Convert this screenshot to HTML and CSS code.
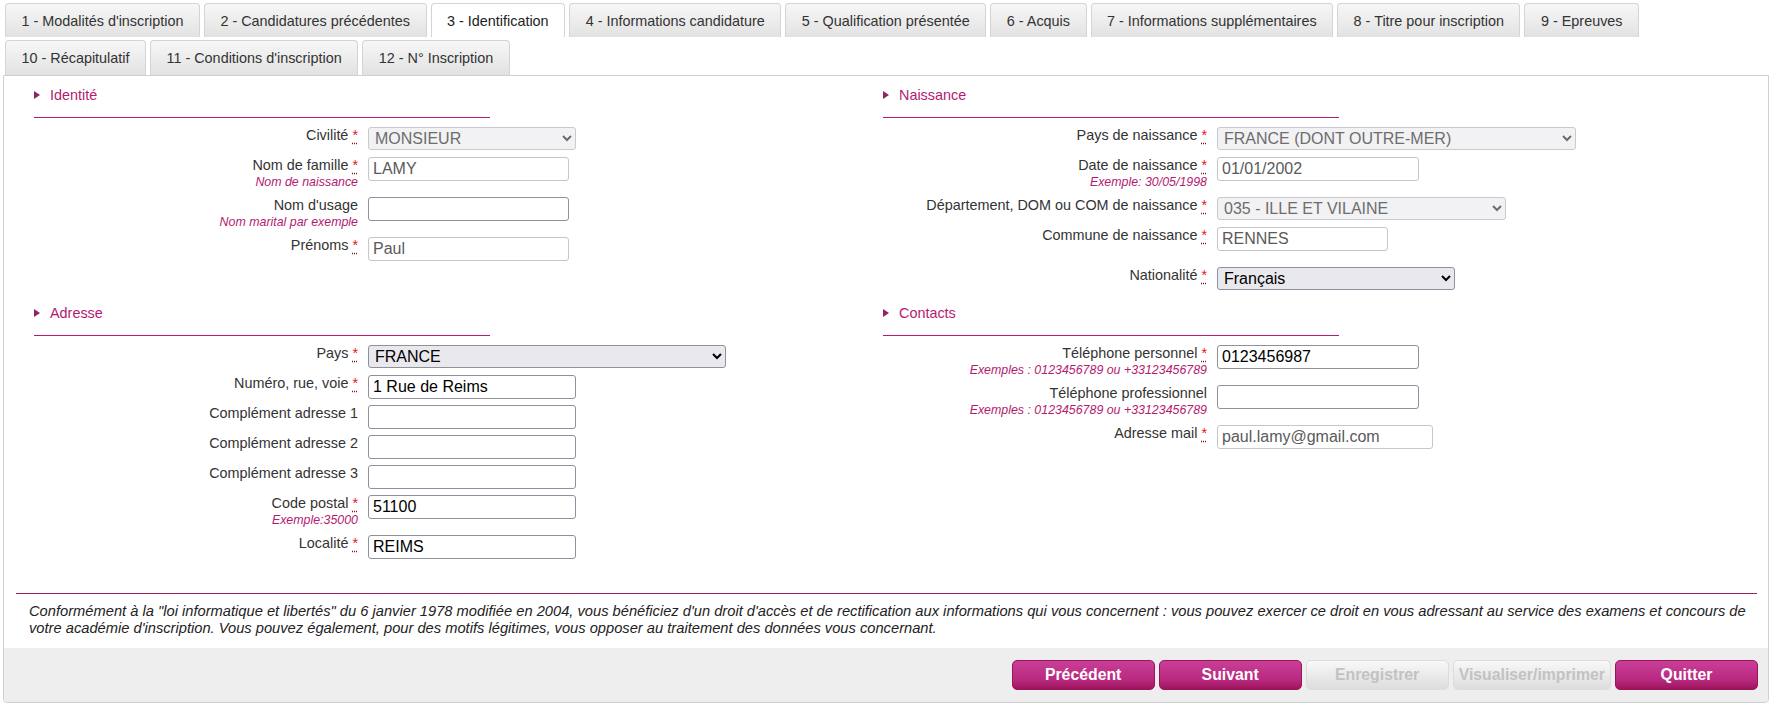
FILE: index.html
```html
<!DOCTYPE html>
<html lang="fr">
<head>
  <meta charset="UTF-8" />
  <title>Inscription - Identification</title>
  <link rel="stylesheet" href="styles.css">
</head>
<body>
  <div class="tabs">
    <div class="tab-row">
      <a class="tab" href="#">1 - Modalités d'inscription</a>
      <a class="tab" href="#">2 - Candidatures précédentes</a>
      <a class="tab active" href="#">3 - Identification</a>
      <a class="tab" href="#">4 - Informations candidature</a>
      <a class="tab" href="#">5 - Qualification présentée</a>
      <a class="tab" href="#">6 - Acquis</a>
      <a class="tab" href="#">7 - Informations supplémentaires</a>
      <a class="tab" href="#">8 - Titre pour inscription</a>
      <a class="tab" href="#">9 - Epreuves</a>
    </div>
    <div class="tab-row">
      <a class="tab" href="#">10 - Récapitulatif</a>
      <a class="tab" href="#">11 - Conditions d'inscription</a>
      <a class="tab" href="#">12 - N° Inscription</a>
    </div>
  </div>

  <div class="panel">
    <div class="form-grid">

      <section class="section">
        <h2 class="section-title"><svg class="arrow" width="6" height="8" viewBox="0 0 6 8"><polygon points="0,0 6,4 0,8" /></svg>Identité</h2>
        <div class="row">
          <div class="label">Civilité <abbr class="req" title="obligatoire">*</abbr></div>
          <select class="field w-208" disabled><option>MONSIEUR</option></select>
        </div>
        <div class="row">
          <div class="label">Nom de famille <abbr class="req" title="obligatoire">*</abbr><span class="hint">Nom de naissance</span></div>
          <input class="field ro w-201" type="text" value="LAMY" readonly>
        </div>
        <div class="row">
          <div class="label">Nom d'usage<span class="hint">Nom marital par exemple</span></div>
          <input class="field w-201" type="text" value="">
        </div>
        <div class="row">
          <div class="label">Prénoms <abbr class="req" title="obligatoire">*</abbr></div>
          <input class="field ro w-201" type="text" value="Paul" readonly>
        </div>
      </section>

      <section class="section">
        <h2 class="section-title"><svg class="arrow" width="6" height="8" viewBox="0 0 6 8"><polygon points="0,0 6,4 0,8" /></svg>Naissance</h2>
        <div class="row">
          <div class="label">Pays de naissance <abbr class="req" title="obligatoire">*</abbr></div>
          <select class="field w-359" disabled><option>FRANCE (DONT OUTRE-MER)</option></select>
        </div>
        <div class="row">
          <div class="label">Date de naissance <abbr class="req" title="obligatoire">*</abbr><span class="hint">Exemple: 30/05/1998</span></div>
          <input class="field ro w-202" type="text" value="01/01/2002" readonly>
        </div>
        <div class="row">
          <div class="label">Département, DOM ou COM de naissance <abbr class="req" title="obligatoire">*</abbr></div>
          <select class="field w-289" disabled><option>035 - ILLE ET VILAINE</option></select>
        </div>
        <div class="row">
          <div class="label">Commune de naissance <abbr class="req" title="obligatoire">*</abbr><span class="hint">&nbsp;</span></div>
          <input class="field ro w-171" type="text" value="RENNES" readonly>
        </div>
        <div class="row">
          <div class="label">Nationalité <abbr class="req" title="obligatoire">*</abbr></div>
          <select class="field w-238"><option>Français</option></select>
        </div>
      </section>

      <section class="section">
        <h2 class="section-title"><svg class="arrow" width="6" height="8" viewBox="0 0 6 8"><polygon points="0,0 6,4 0,8" /></svg>Adresse</h2>
        <div class="row">
          <div class="label">Pays <abbr class="req" title="obligatoire">*</abbr></div>
          <select class="field w-358"><option>FRANCE</option></select>
        </div>
        <div class="row">
          <div class="label">Numéro, rue, voie <abbr class="req" title="obligatoire">*</abbr></div>
          <input class="field w-208" type="text" value="1 Rue de Reims">
        </div>
        <div class="row">
          <div class="label">Complément adresse 1</div>
          <input class="field w-208" type="text" value="">
        </div>
        <div class="row">
          <div class="label">Complément adresse 2</div>
          <input class="field w-208" type="text" value="">
        </div>
        <div class="row">
          <div class="label">Complément adresse 3</div>
          <input class="field w-208" type="text" value="">
        </div>
        <div class="row">
          <div class="label">Code postal <abbr class="req" title="obligatoire">*</abbr><span class="hint">Exemple:35000</span></div>
          <input class="field w-208" type="text" value="51100">
        </div>
        <div class="row">
          <div class="label">Localité <abbr class="req" title="obligatoire">*</abbr></div>
          <input class="field w-208" type="text" value="REIMS">
        </div>
      </section>

      <section class="section">
        <h2 class="section-title"><svg class="arrow" width="6" height="8" viewBox="0 0 6 8"><polygon points="0,0 6,4 0,8" /></svg>Contacts</h2>
        <div class="row">
          <div class="label">Téléphone personnel <abbr class="req" title="obligatoire">*</abbr><span class="hint">Exemples : 0123456789 ou +33123456789</span></div>
          <input class="field w-202" type="text" value="0123456987">
        </div>
        <div class="row">
          <div class="label">Téléphone professionnel<span class="hint">Exemples : 0123456789 ou +33123456789</span></div>
          <input class="field w-202" type="text" value="">
        </div>
        <div class="row">
          <div class="label">Adresse mail <abbr class="req" title="obligatoire">*</abbr></div>
          <input class="field ro w-216" type="text" value="paul.lamy@gmail.com" readonly>
        </div>
      </section>

    </div>

    <p class="legal">Conformément à la "loi informatique et libertés" du 6 janvier 1978 modifiée en 2004, vous bénéficiez d'un droit d'accès et de rectification aux informations qui vous concernent : vous pouvez exercer ce droit en vous adressant au service des examens et concours de votre académie d'inscription. Vous pouvez également, pour des motifs légitimes, vous opposer au traitement des données vous concernant.</p>

    <div class="actions">
      <button class="btn">Précédent</button>
      <button class="btn">Suivant</button>
      <button class="btn" disabled>Enregistrer</button>
      <button class="btn" disabled>Visualiser/imprimer</button>
      <button class="btn">Quitter</button>
    </div>
  </div>
</body>
</html>
```

FILE: styles.css
```css
body {
  font-family: "Liberation Sans", Arial, sans-serif;
  font-size: 14.4px;
  color: #333;
  background: #fff;
  margin: 0;
  padding: 0 8px 0 3px;
}

/* onglets */
.tabs {
  padding: 3px 0 0 2px;
}

.tab-row {
  display: flex;
  gap: 4px;
  margin-bottom: 3px;
}

.tab-row:last-child {
  margin-bottom: 0;
}

.tab {
  display: block;
  height: 34px;
  line-height: 34px;
  padding: 0 15.5px;
  box-sizing: border-box;
  color: #333;
  text-decoration: none;
  white-space: nowrap;
  border: 1px solid #d4d4d4;
  border-bottom: none;
  border-radius: 4px 4px 0 0;
  background: linear-gradient(#f7f7f7, #e2e2e2);
}

.tab-row:last-child .tab {
  height: 35px;
}

.tab.active {
  background: #fff;
  color: #222;
}

/* panneau */
.panel {
  border: 1px solid #cfcfcf;
  border-radius: 0 0 4px 4px;
  padding-top: 3px;
}

.form-grid {
  display: grid;
  grid-template-columns: 849px 1fr;
  padding-left: 30px;
  padding-bottom: 28px;
}

.section {
  padding-top: 6px;
}

.section-title {
  display: flex;
  align-items: center;
  width: 456px;
  margin: 0 0 9px;
  padding-bottom: 12px;
  height: 20px;
  font-size: 14.4px;
  font-weight: normal;
  line-height: 20px;
  color: #b41a70;
  border-bottom: 1px solid #b41a70;
}

.arrow {
  fill: #8e2463;
  margin-right: 10px;
}

.row {
  display: flex;
  align-items: flex-start;
  gap: 10px;
  margin-bottom: 6px;
  min-height: 24px;
}

.label {
  width: 324px;
  flex-shrink: 0;
  text-align: right;
  line-height: 17px;
  color: #333;
}

.req {
  color: #e8141c;
  text-decoration: underline dotted #8a1010;
  text-underline-offset: 3px;
  cursor: help;
}

.hint {
  display: block;
  font-size: 12.4px;
  font-style: italic;
  line-height: 17px;
  color: #b41a70;
}

.field {
  height: 24px;
  box-sizing: border-box;
  font-family: "Liberation Sans", Arial, sans-serif;
  font-size: 16px;
  color: #000;
  border: 1px solid #8f8f9d;
  border-radius: 3px;
  padding: 0 4px;
  margin: 0;
  background: #fff;
}

select.field {
  height: 23px;
  background-color: #e9e9ed;
  padding: 0 2px;
}

select.field:disabled {
  background-color: #f2f2f4;
  border-color: #c9c9cf;
  color: #6d6d6d;
  opacity: 1;
}

.field.ro {
  border-color: #c6c6c6;
  color: #5a5a5a;
}

.w-171 { width: 171px; }
.w-201 { width: 201px; }
.w-202 { width: 202px; }
.w-208 { width: 208px; }
.w-216 { width: 216px; }
.w-238 { width: 238px; }
.w-289 { width: 289px; }
.w-358 { width: 358px; }
.w-359 { width: 359px; }

/* mentions */
.legal {
  margin: 0 11px 0 12px;
  padding: 9px 4px 11px 13px;
  border-top: 1px solid #9e1f5f;
  font-size: 14.7px;
  font-style: italic;
  line-height: 17px;
  color: #222;
}

/* boutons */
.actions {
  display: flex;
  justify-content: flex-end;
  gap: 4px;
  padding: 12px 10px;
  background: #eeeeee;
  border-radius: 0 0 4px 4px;
}

.btn {
  min-width: 143px;
  height: 30px;
  border: 1px solid #9c1458;
  border-radius: 5px;
  background: linear-gradient(#c93f98, #b8287f 70%, #9d145a);
  color: #fff;
  font-family: "Liberation Sans", Arial, sans-serif;
  font-size: 15.8px;
  font-weight: bold;
  cursor: pointer;
  padding: 0 5px;
}

.btn:hover {
  background: #a5165f;
}

.btn:disabled {
  background: linear-gradient(#f8f8f8, #dddddd);
  border-color: #dcdcdc;
  color: #c2c2c2;
  cursor: default;
}
```
